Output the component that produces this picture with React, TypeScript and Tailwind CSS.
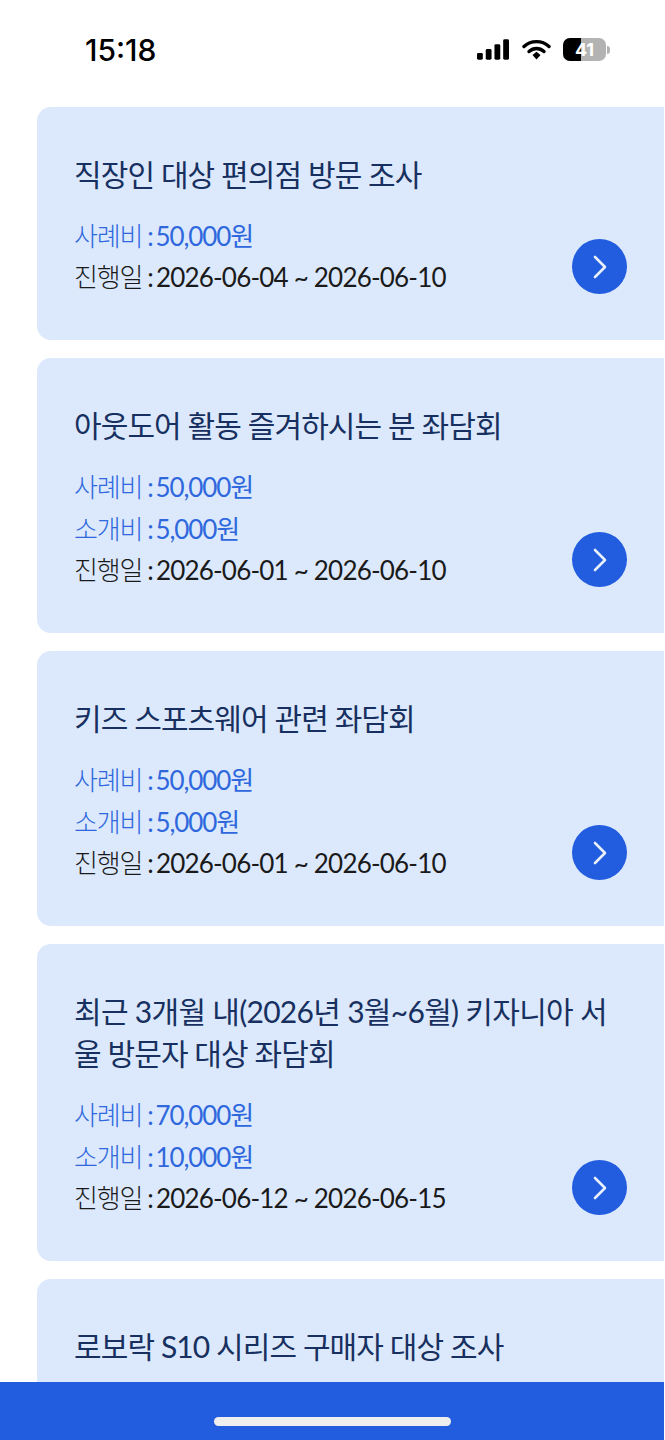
import React from 'react';

const surveys: any[] = [
    { title: ['직장인 대상 편의점 방문 조사'], fee: '50,000원', date: '2026-06-04 ~ 2026-06-10' },
    { title: ['아웃도어 활동 즐겨하시는 분 좌담회'], fee: '50,000원', referral: '5,000원', date: '2026-06-01 ~ 2026-06-10' },
    { title: ['키즈 스포츠웨어 관련 좌담회'], fee: '50,000원', referral: '5,000원', date: '2026-06-01 ~ 2026-06-10' },
    { title: ['최근 3개월 내(2026년 3월~6월) 키자니아 서', '울 방문자 대상 좌담회'], fee: '70,000원', referral: '10,000원', date: '2026-06-12 ~ 2026-06-15' },
    // only the title shows above the bottom bar
    { title: ['로보락 S10 시리즈 구매자 대상 조사'] },
];

const StatusBar = () => (
    <div className="h-[107px] flex items-start justify-between pt-[33px] pl-[85px] pr-[54px]">
        <span className="text-[30px] leading-[34px] font-medium text-black font-['Inter',sans-serif]">15:18</span>
        <div className="flex items-center gap-[13px] pt-[5px]">
            <svg width="32" height="21" viewBox="0 0 33 21">
                <rect x="0" y="14" width="6" height="7" rx="1.5" fill="#000" />
                <rect x="9" y="10" width="6" height="11" rx="1.5" fill="#000" />
                <rect x="18" y="5" width="6" height="16" rx="1.5" fill="#000" />
                <rect x="27" y="0" width="6" height="21" rx="1.5" fill="#000" />
            </svg>
            <svg width="29" height="21" viewBox="0 0 29 21" fill="none">
                <path d="M2 7.5C9 1 20 1 27 7.5" stroke="#000" strokeWidth="3.4" strokeLinecap="round" />
                <path d="M7 12.5C11.5 8.5 17.5 8.5 22 12.5" stroke="#000" strokeWidth="3.4" strokeLinecap="round" />
                <path d="M10.5 16L14.5 12.8L18.500 16L14.500 20.500Z" fill="#000" />
            </svg>
            <div className="relative flex items-center -ml-[1px]">
                <div className="w-[43px] h-[23px] rounded-[7px] overflow-hidden flex bg-[#b3b3b3]">
                    <div className="w-[18px] h-full bg-black" />
                </div>
                <span className="absolute left-0 top-0 w-[43px] h-[23px] text-center text-[18px] leading-[23px] font-bold text-white font-['Inter',sans-serif]">41</span>
                <div className="w-[3px] h-[8px] rounded-r-full bg-[#b3b3b3] ml-[1px]" />
            </div>
        </div>
    </div>
);

const InfoRow = ({ label, value, blue }: { label: string; value: string; blue?: boolean }) => (
    <p className={`flex text-[26px] whitespace-nowrap ${blue ? 'leading-[44px] mb-[-2px] text-[#2f68dc] tracking-[-1.1px]' : 'leading-[42px] text-[#1a1a1a] tracking-[-0.8px]'}`}>
        <span className="font-light tracking-[-1.2px]">{label}</span>
        <span className="ml-[5px] mr-[3px]">:</span>
        <span>{value}</span>
    </p>
);

const SurveyCard = ({ item }: { item: any }) => (
    <div className="relative ml-[37px] shrink-0 rounded-l-[14px] bg-[#dce9fc] pl-[37px] pr-[50px] pt-[46px] pb-[42px]">
        <div className="mb-[19px]">
            {item.title.map((line: string) => (
                <p key={line} className={`text-[30px] leading-[42px] whitespace-nowrap text-[#17305f] ${line.length > 22 ? 'tracking-[-0.7px]' : 'tracking-[-0.9px]'}`}>{line}</p>
            ))}
        </div>
        {item.fee && <InfoRow label="사례비" value={item.fee} blue />}
        {item.referral && <InfoRow label="소개비" value={item.referral} blue />}
        {item.date && <InfoRow label="진행일" value={item.date} />}
        {item.date && (
            <div className="absolute right-[37px] bottom-[46px] w-[55px] h-[55px] rounded-full bg-[#225cdf] flex items-center justify-center">
                <svg width="16" height="24" viewBox="0 0 16 24" fill="none">
                    <path d="M3 2L13 12L3 22" stroke="#e8f0fd" strokeWidth="2.6" strokeLinecap="round" strokeLinejoin="round" />
                </svg>
            </div>
        )}
    </div>
);

const App = () => {
    return (
        <div className="relative h-[1440px] w-[664px] overflow-hidden bg-white font-['Lato','Noto_Sans_CJK_KR',sans-serif]">
            <StatusBar />
            <div className="flex flex-col gap-[18px]">
                {surveys.map((item) => (
                    <SurveyCard key={item.title[0]} item={item} />
                ))}
            </div>
            <div className="absolute left-0 right-0 bottom-0 h-[58px] bg-[#225cdf] flex justify-center">
                <div className="mt-[35px] w-[237px] h-[9px] rounded-full bg-[#eeeeee]" />
            </div>
        </div>
    );
};

export default App;
